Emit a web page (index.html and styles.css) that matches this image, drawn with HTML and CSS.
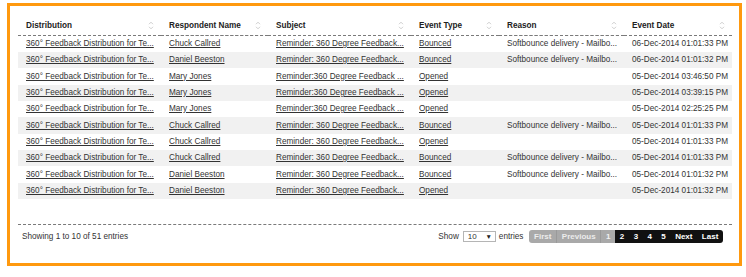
FILE: index.html
```html
<!DOCTYPE html>
<html>
<head>
<meta charset="utf-8">
<link rel="stylesheet" href="styles.css">
</head>
<body>
<div class="panel">
  <table class="grid">
    <colgroup>
      <col class="c1"><col class="c2"><col class="c3"><col class="c4"><col class="c5"><col class="c6">
    </colgroup>
    <thead>
      <tr>
        <th><div class="th-in"><span>Distribution</span><svg class="sort" viewBox="0 0 6 9"><polyline points="1,3.2 3,1.2 5,3.2"/><polyline points="1,5.8 3,7.8 5,5.8"/></svg></div></th>
        <th><div class="th-in"><span>Respondent Name</span><svg class="sort" viewBox="0 0 6 9"><polyline points="1,3.2 3,1.2 5,3.2"/><polyline points="1,5.8 3,7.8 5,5.8"/></svg></div></th>
        <th><div class="th-in"><span>Subject</span><svg class="sort" viewBox="0 0 6 9"><polyline points="1,3.2 3,1.2 5,3.2"/><polyline points="1,5.8 3,7.8 5,5.8"/></svg></div></th>
        <th><div class="th-in"><span>Event Type</span><svg class="sort" viewBox="0 0 6 9"><polyline points="1,3.2 3,1.2 5,3.2"/><polyline points="1,5.8 3,7.8 5,5.8"/></svg></div></th>
        <th><div class="th-in"><span>Reason</span><svg class="sort" viewBox="0 0 6 9"><polyline points="1,3.2 3,1.2 5,3.2"/><polyline points="1,5.8 3,7.8 5,5.8"/></svg></div></th>
        <th><div class="th-in"><span>Event Date</span><svg class="sort" viewBox="0 0 6 9"><polyline points="1,3.2 3,1.2 5,3.2"/><polyline points="1,5.8 3,7.8 5,5.8"/></svg></div></th>
      </tr>
    </thead>
    <tbody>
      <tr><td><a href="#">360° Feedback Distribution for Te...</a></td><td><a href="#">Chuck Callred</a></td><td><a href="#">Reminder: 360 Degree Feedback...</a></td><td><a href="#">Bounced</a></td><td>Softbounce delivery - Mailbo...</td><td>06-Dec-2014 01:01:33 PM</td></tr>
      <tr><td><a href="#">360° Feedback Distribution for Te...</a></td><td><a href="#">Daniel Beeston</a></td><td><a href="#">Reminder: 360 Degree Feedback...</a></td><td><a href="#">Bounced</a></td><td>Softbounce delivery - Mailbo...</td><td>06-Dec-2014 01:01:32 PM</td></tr>
      <tr><td><a href="#">360° Feedback Distribution for Te...</a></td><td><a href="#">Mary Jones</a></td><td><a href="#">Reminder:360 Degree Feedback ...</a></td><td><a href="#">Opened</a></td><td></td><td>05-Dec-2014 03:46:50 PM</td></tr>
      <tr><td><a href="#">360° Feedback Distribution for Te...</a></td><td><a href="#">Mary Jones</a></td><td><a href="#">Reminder:360 Degree Feedback ...</a></td><td><a href="#">Opened</a></td><td></td><td>05-Dec-2014 03:39:15 PM</td></tr>
      <tr><td><a href="#">360° Feedback Distribution for Te...</a></td><td><a href="#">Mary Jones</a></td><td><a href="#">Reminder:360 Degree Feedback ...</a></td><td><a href="#">Opened</a></td><td></td><td>05-Dec-2014 02:25:25 PM</td></tr>
      <tr><td><a href="#">360° Feedback Distribution for Te...</a></td><td><a href="#">Chuck Callred</a></td><td><a href="#">Reminder: 360 Degree Feedback...</a></td><td><a href="#">Bounced</a></td><td>Softbounce delivery - Mailbo...</td><td>05-Dec-2014 01:01:33 PM</td></tr>
      <tr><td><a href="#">360° Feedback Distribution for Te...</a></td><td><a href="#">Chuck Callred</a></td><td><a href="#">Reminder: 360 Degree Feedback...</a></td><td><a href="#">Opened</a></td><td></td><td>05-Dec-2014 01:01:33 PM</td></tr>
      <tr><td><a href="#">360° Feedback Distribution for Te...</a></td><td><a href="#">Chuck Callred</a></td><td><a href="#">Reminder: 360 Degree Feedback...</a></td><td><a href="#">Bounced</a></td><td>Softbounce delivery - Mailbo...</td><td>05-Dec-2014 01:01:33 PM</td></tr>
      <tr><td><a href="#">360° Feedback Distribution for Te...</a></td><td><a href="#">Daniel Beeston</a></td><td><a href="#">Reminder: 360 Degree Feedback...</a></td><td><a href="#">Bounced</a></td><td>Softbounce delivery - Mailbo...</td><td>05-Dec-2014 01:01:32 PM</td></tr>
      <tr><td><a href="#">360° Feedback Distribution for Te...</a></td><td><a href="#">Daniel Beeston</a></td><td><a href="#">Reminder: 360 Degree Feedback...</a></td><td><a href="#">Opened</a></td><td></td><td>05-Dec-2014 01:01:32 PM</td></tr>
    </tbody>
  </table>
  <div class="footer">
    <div class="info">Showing 1 to 10 of 51 entries</div>
    <div class="controls">
      <span class="lbl">Show</span>
      <div class="select"><span>10</span><span class="arrow">▼</span></div>
      <span class="lbl">entries</span>
      <div class="pager">
        <span class="pg off first">First</span>
        <span class="pg off">Previous</span>
        <span class="pg cur">1</span>
        <span class="pg">2</span>
        <span class="pg">3</span>
        <span class="pg">4</span>
        <span class="pg">5</span>
        <span class="pg">Next</span>
        <span class="pg last">Last</span>
      </div>
    </div>
  </div>
</div>
</body>
</html>
```

FILE: styles.css
```css
html, body {
  margin: 0;
  padding: 0;
  background: #fff;
}
body {
  font-family: "Liberation Sans", Arial, sans-serif;
  font-size: 8.2px;
  color: #333;
}
.panel {
  box-sizing: border-box;
  width: 735px;
  height: 263px;
  margin: 3px 0 0 7px;
  border: 3px solid #ff990f;
  padding: 10px 7px 0 8px;
}
.grid {
  width: 714px;
  table-layout: fixed;
  border-collapse: collapse;
}
.c1 { width: 143px; }
.c2 { width: 107px; }
.c3 { width: 143px; }
.c4 { width: 88px; }
.c5 { width: 125px; }
.c6 { width: 108px; }
.grid th {
  height: 19px;
  padding: 0 7px 0 8px;
  text-align: left;
  font-weight: bold;
  color: #222;
  border-bottom: 1px dashed #7a7a7a;
  vertical-align: middle;
}
.th-in {
  display: flex;
  align-items: center;
  justify-content: space-between;
}
.sort {
  width: 6px;
  height: 9px;
  flex: none;
}
.sort polyline {
  fill: none;
  stroke: #c8c8c8;
  stroke-width: 0.9;
}
.grid td {
  height: 16px;
  padding: 0 0 0 8px;
  white-space: nowrap;
  overflow: hidden;
  vertical-align: middle;
  line-height: 10px;
  color: #333;
}
.grid tbody tr:nth-child(3n) td {
  height: 17px;
}
.grid tbody tr:nth-child(even) td {
  background: #f1f1f1;
}
.grid a {
  color: #333;
  text-decoration: underline;
}
.footer {
  width: 714px;
  margin-top: 25px;
  border-top: 1px dashed #7a7a7a;
  height: 23px;
  display: flex;
  align-items: center;
  justify-content: space-between;
  box-sizing: border-box;
  padding: 0 9px 0 4px;
}
.info {
  color: #333;
}
.controls {
  display: flex;
  align-items: center;
}
.lbl {
  color: #333;
}
.select {
  box-sizing: border-box;
  width: 33px;
  height: 11px;
  margin: 0 3px 0 4px;
  border: 1px solid #b5b5b5;
  background: #fff;
  display: flex;
  align-items: center;
  justify-content: space-between;
  padding: 0 3px 0 4px;
  font-size: 8px;
  color: #333;
}
.select .arrow {
  font-size: 6.5px;
  color: #222;
}
.pager {
  display: flex;
  margin-left: 6px;
  height: 13px;
  align-items: stretch;
}
.pg {
  display: flex;
  align-items: center;
  padding: 0 4.7px;
  background: #111;
  color: #fff;
  font-weight: bold;
  font-size: 8px;
}
.pg.off {
  background: #a9a9a9;
  color: #ececec;
  border-right: 1px solid #9a9a9a;
}
.pg.cur {
  background: #a9a9a9;
  color: #f2f2f2;
}
.pg.first {
  border-radius: 3px 0 0 3px;
}
.pg.last {
  border-radius: 0 3px 3px 0;
}
```
